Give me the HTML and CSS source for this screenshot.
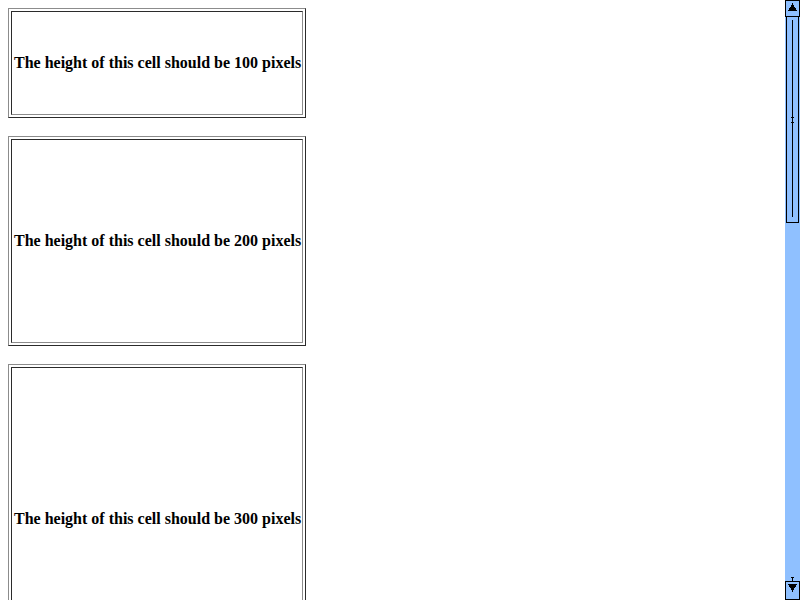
FILE: index.html
```html
<!DOCTYPE html>
<html>
<head>
<meta charset="utf-8">
<link rel="stylesheet" href="styles.css">
</head>
<body>
<div class="page">
  <table class="box"><tr><td class="cell h100">The height of this cell should be 100 pixels</td></tr></table>
  <table class="box"><tr><td class="cell h200">The height of this cell should be 200 pixels</td></tr></table>
  <table class="box"><tr><td class="cell h300">The height of this cell should be 300 pixels</td></tr></table>
</div>
<div class="scrollbar">
  <svg width="15" height="600" viewBox="0 0 15 600" xmlns="http://www.w3.org/2000/svg" shape-rendering="crispEdges">
    <rect x="0" y="0" width="15" height="600" fill="#8fc0ff"/>
    <rect x="0.5" y="0.5" width="14" height="16" fill="none" stroke="#000"/>
    <polygon points="7.5,3 3,11 12,11" fill="#000"/>
    <line x1="1.5" y1="17" x2="1.5" y2="223" stroke="#000"/>
    <line x1="13.5" y1="17" x2="13.5" y2="223" stroke="#000"/>
    <line x1="1" y1="222.5" x2="14" y2="222.5" stroke="#000"/>
    <line x1="7.5" y1="20" x2="7.5" y2="217" stroke="#000"/>
    <line x1="6" y1="117.5" x2="9" y2="117.5" stroke="#000"/>
    <line x1="6" y1="122.5" x2="9" y2="122.5" stroke="#000"/>
    <line x1="6" y1="577.5" x2="9" y2="577.5" stroke="#000"/>
    <line x1="7.5" y1="577" x2="7.5" y2="582" stroke="#000"/>
    <rect x="0.5" y="581.5" width="14" height="18" fill="none" stroke="#000"/>
    <polygon points="3,584 12,584 7.5,592" fill="#000"/>
  </svg>
</div>
</body>
</html>
```
FILE: styles.css
```css
html, body {
  margin: 0;
  padding: 0;
  overflow: hidden;
  background: #fff;
}
.page {
  padding: 8px;
  display: flex;
  flex-direction: column;
  align-items: flex-start;
  gap: 18px;
}
.box {
  border-collapse: separate;
  border-spacing: 2px;
  border-style: solid;
  border-width: 1px;
  border-color: #8c8c8c #2b2b2b #2b2b2b #8c8c8c;
}
.cell {
  box-sizing: content-box;
  padding: 1px 1px 1px 2px;
  border-style: solid;
  border-width: 1px;
  border-color: #2b2b2b #8c8c8c #8c8c8c #2b2b2b;
  vertical-align: middle;
  white-space: nowrap;
  font-family: "Liberation Serif", serif;
  font-weight: bold;
  font-size: 16px;
  color: #000;
}
.h100 { height: 100px; }
.h200 { height: 200px; }
.h300 { height: 300px; }
.scrollbar {
  position: fixed;
  top: 0;
  right: 0;
  width: 15px;
  height: 600px;
  line-height: 0;
}
.scrollbar svg { display: block; }
```
